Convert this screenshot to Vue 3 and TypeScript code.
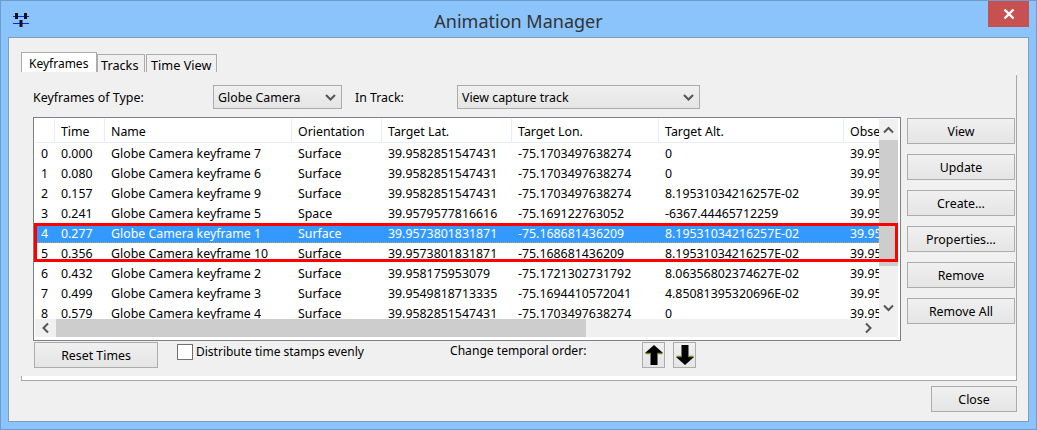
<script setup lang="ts">
interface Row {
  id: number
  time: string
  key: number
  orient: string
  lat: string
  lon: string
  alt: string
  obs: string
}

const LAT = '39.9582851547431'
const LON = '-75.1703497638274'
const ALT = '8.19531034216257E-02'
const OBS = '39.9582851547431'

const rows: Row[] = [
  { id: 0, time: '0.000', key: 7, orient: 'Surface', lat: LAT, lon: LON, alt: '0', obs: OBS },
  { id: 1, time: '0.080', key: 6, orient: 'Surface', lat: LAT, lon: LON, alt: '0', obs: OBS },
  { id: 2, time: '0.157', key: 9, orient: 'Surface', lat: LAT, lon: LON, alt: ALT, obs: OBS },
  { id: 3, time: '0.241', key: 5, orient: 'Space', lat: '39.9579577816616', lon: '-75.169122763052', alt: '-6367.44465712259', obs: OBS },
  { id: 4, time: '0.277', key: 1, orient: 'Surface', lat: '39.9573801831871', lon: '-75.168681436209', alt: ALT, obs: OBS },
  { id: 5, time: '0.356', key: 10, orient: 'Surface', lat: '39.9573801831871', lon: '-75.168681436209', alt: ALT, obs: OBS },
  { id: 6, time: '0.432', key: 2, orient: 'Surface', lat: '39.958175953079', lon: '-75.1721302731792', alt: '8.06356802374627E-02', obs: OBS },
  { id: 7, time: '0.499', key: 3, orient: 'Surface', lat: '39.9549818713335', lon: '-75.1694410572041', alt: '4.85081395320696E-02', obs: OBS },
  { id: 8, time: '0.579', key: 4, orient: 'Surface', lat: LAT, lon: LON, alt: '0', obs: OBS },
]

const headers = ['', 'Time', 'Name', 'Orientation', 'Target Lat.', 'Target Lon.', 'Target Alt.', 'Observer Lat.']
const actions = ['View', 'Update', 'Create...', 'Properties...', 'Remove', 'Remove All']
</script>

<template>
  <div class="window">
    <header class="titlebar">
      <svg class="app-icon" width="16" height="14" viewBox="0 0 16 14">
        <path d="M0 3.500h16M0 10.500h16" stroke="#1a1aff" stroke-width="1" />
        <path d="M3.500 0v6M12.500 0v6M8 7v7" stroke="#111" stroke-width="3" />
      </svg>
      <h1 class="title">Animation Manager</h1>
      <button class="win-close" aria-label="Close">
        <svg width="12" height="12" viewBox="0 0 12 12"><path d="M1.500 1.500l9 9M10.500 1.500l-9 9" stroke="#fff" stroke-width="2.400" /></svg>
      </button>
    </header>

    <div class="client">
      <div class="tabs">
        <div class="tab active">Keyframes</div>
        <div class="tab">Tracks</div>
        <div class="tab">Time View</div>
      </div>

      <section class="pane">
        <div class="inner">
          <div class="filters">
            <label class="lbl-type">Keyframes of Type:</label>
            <div class="combo combo-type">Globe Camera<svg class="chev" width="11" height="7" viewBox="0 0 11 7"><path d="M1 1l4.500 4.500L10 1" fill="none" stroke="#555" stroke-width="2" /></svg></div>
            <label class="lbl-track">In Track:</label>
            <div class="combo combo-track">View capture track<svg class="chev" width="11" height="7" viewBox="0 0 11 7"><path d="M1 1l4.500 4.500L10 1" fill="none" stroke="#555" stroke-width="2" /></svg></div>
          </div>

          <div class="middle">
            <div class="table-frame">
              <div class="viewport">
                <div class="row head">
                  <div v-for="h in headers" :key="h" class="cell">{{ h }}</div>
                </div>
                <div v-for="r in rows" :key="r.id" class="row" :class="{ selected: r.id === 4 }">
                  <div class="cell num">{{ r.id }}</div>
                  <div class="cell">{{ r.time }}</div>
                  <div class="cell">Globe Camera keyframe {{ r.key }}</div>
                  <div class="cell">{{ r.orient }}</div>
                  <div class="cell">{{ r.lat }}</div>
                  <div class="cell">{{ r.lon }}</div>
                  <div class="cell">{{ r.alt }}</div>
                  <div class="cell">{{ r.obs }}</div>
                </div>
              </div>
              <div class="vbar">
                <svg class="sb-arrow" width="19" height="21" viewBox="0 0 19 21"><path d="M5 13.500l4.500-4.500L14 13.500" fill="none" stroke="#555" stroke-width="2" /></svg>
                <div class="vthumb"></div>
                <svg class="sb-arrow end" width="19" height="18" viewBox="0 0 19 18"><path d="M5 4.500l4.500 4.500L14 4.500" fill="none" stroke="#555" stroke-width="2" /></svg>
              </div>
              <div class="hbar">
                <svg width="21" height="18" viewBox="0 0 21 18"><path d="M13 4.500l-4.500 4.500 4.500 4.500" fill="none" stroke="#555" stroke-width="2" /></svg>
                <div class="hthumb"></div>
                <svg class="h-end" width="21" height="18" viewBox="0 0 21 18"><path d="M8 4.500l4.500 4.500-4.500 4.500" fill="none" stroke="#555" stroke-width="2" /></svg>
              </div>
              <div class="corner"></div>
              <div class="highlight"></div>
            </div>

            <div class="actions">
              <button v-for="a in actions" :key="a" class="btn action">{{ a }}</button>
            </div>
          </div>

          <div class="below">
            <button class="btn reset">Reset Times</button>
            <span class="check"></span>
            <span class="check-label">Distribute time stamps evenly</span>
            <span class="order-label">Change temporal order:</span>
            <button class="btn arrow" aria-label="Move up">
              <svg width="20" height="22" viewBox="0 0 20 22"><path d="M10 1L19 9H13.500V21H6.500V9H1Z" fill="#000" /><path d="M1.500 9.500H6.500M13.500 9.500h5" stroke="#8a8420" stroke-width="1.500" /></svg>
            </button>
            <button class="btn arrow" aria-label="Move down">
              <svg width="20" height="22" viewBox="0 0 20 22"><path d="M10 21L19 13H13.500V1H6.500V13H1Z" fill="#000" /><path d="M1.500 12.500H6.500M13.500 12.500h5" stroke="#8a8420" stroke-width="1.500" /></svg>
            </button>
          </div>
        </div>
      </section>

      <footer class="footer">
        <button class="btn close">Close</button>
      </footer>
    </div>
  </div>
</template>

<style>
html, body { margin: 0; background: #8ac4fb; }
</style>

<style scoped>
.window {
  box-sizing: border-box;
  width: 1037px;
  height: 430px;
  display: flex;
  flex-direction: column;
  background: #8ac4fb;
  border: 1px solid #6f9ccb;
  font-family: "Noto Sans", "Liberation Sans", sans-serif;
  font-size: 12.35px;
  color: #000;
  overflow: hidden;
}
.titlebar {
  position: relative;
  height: 36px;
  flex: none;
  display: flex;
  align-items: flex-start;
  justify-content: center;
}
.app-icon { position: absolute; left: 12px; top: 12px; }
.title {
  margin: 8px 0 0;
  font-size: 18px;
  line-height: 24px;
  font-weight: 400;
  color: #333;
}
.win-close {
  position: absolute;
  right: 7px;
  top: 0;
  width: 41px;
  height: 26px;
  padding: 0;
  border: 0;
  background: #c75050;
  display: flex;
  align-items: center;
  justify-content: center;
}
.client {
  flex: 1;
  margin: 0 7px 7px;
  box-sizing: border-box;
  background: #f0f0f0;
  border: 1px solid #7f9db9;
  padding: 14px 12px 0 12px;
  display: flex;
  flex-direction: column;
  min-height: 0;
}
.tabs {
  display: flex;
  align-items: flex-end;
  height: 20px;
  flex: none;
}
.tab {
  box-sizing: border-box;
  height: 18px;
  line-height: 21px;
  padding: 0 3px;
  border: 1px solid #acacac;
  border-bottom: 0;
  background: #f0f0f0;
  margin-left: 1px;
  overflow: hidden;
  white-space: nowrap;
  font-size: 12.7px;
}
.tab.active {
  height: 20px;
  line-height: 22px;
  background: #fff;
  margin-left: 0;
  width: 76px;
  padding: 0 7px;
  font-size: 12px;
}
.tab:nth-child(2) { margin-left: 0; width: 48px; }
.tab:nth-child(3) { margin-left: 1px; width: 71px; padding-left: 4px; }
.pane {
  box-sizing: border-box;
  height: 309px;
  flex: none;
  background: linear-gradient(#a8a8a8, #a8a8a8) no-repeat right bottom / 1px 305px, #fff;
  border: 1px solid #a8a8a8;
  border-top: 0;
  border-right: 0;
  padding-right: 1px;
  width: 996px;
}
.inner {
  box-sizing: border-box;
  height: 304px;
  margin-left: -1px;
  background: #f0f0f0;
  padding: 13px 0 0 12px;
  display: flex;
  flex-direction: column;
}
.filters {
  display: flex;
  align-items: center;
  height: 24px;
  flex: none;
}
.lbl-type { width: 180px; font-size: 12.45px; }
.lbl-track { width: 102px; margin-left: 13px; }
.combo {
  box-sizing: border-box;
  height: 24px;
  line-height: 23px;
  border: 1px solid #acacac;
  background: linear-gradient(#f0f0f0, #e5e5e5);
  padding-left: 4px;
  position: relative;
}
.combo-type { width: 129px; }
.combo-track { width: 243px; }
.chev { position: absolute; right: 5px; top: 8px; }
.middle {
  display: flex;
  margin-top: 8px;
  flex: none;
}
.table-frame {
  box-sizing: border-box;
  position: relative;
  width: 868px;
  height: 224px;
  border: 1px solid #7f8086;
  background: #fff;
  padding: 1px;
  display: grid;
  grid-template-columns: 844px 19px;
  grid-template-rows: 200px 18px;
}
.viewport {
  overflow: hidden;
  background: #fff;
}
.row {
  display: grid;
  grid-template-columns: 20px 50px 187px 90px 130px 147px 185px 140px;
  height: 20px;
  line-height: 22px;
  white-space: nowrap;
}
.row.head {
  height: 24px;
  line-height: 26px;
  background: #fff;
}
.row.head .cell {
  border-right: 1px solid #e5effb;
  border-bottom: 1px solid #e5effb;
  box-sizing: border-box;
  height: 24px;
}
.cell {
  padding-left: 6px;
  overflow: hidden;
}
.row.selected {
  background: #3399ff;
  color: #fff;
  outline: 1px dotted #c0a060;
  outline-offset: -1px;
}
.vbar {
  background: #f0f0f0;
  display: flex;
  flex-direction: column;
}
.vthumb { height: 126px; background: #cdcdcd; flex: none; }
.sb-arrow { flex: none; display: block; }
.sb-arrow.end { margin-top: auto; }
.hbar {
  background: #f0f0f0;
  display: flex;
  align-items: center;
}
.hthumb { width: 530px; height: 18px; background: #cdcdcd; flex: none; }
.h-end { margin-left: auto; }
.corner { background: #f0f0f0; }
.highlight {
  position: absolute;
  left: 0;
  top: 105px;
  width: 864px;
  height: 39px;
  box-sizing: border-box;
  border: 3px solid #f00;
  pointer-events: none;
}
.btn {
  box-sizing: border-box;
  border: 1px solid #acacac;
  background: linear-gradient(#f0f0f0, #e5e5e5);
  font: inherit;
  color: #000;
  padding: 0;
  height: 26px;
}
.actions {
  display: flex;
  flex-direction: column;
  gap: 10px;
  margin-left: 6px;
  padding-top: 1px;
}
.action { width: 108px; }
.below {
  display: flex;
  align-items: flex-start;
  margin-top: 1px;
  padding-left: 1px;
  flex: none;
}
.reset { width: 124px; }
.check {
  box-sizing: border-box;
  width: 16px;
  height: 16px;
  margin: 2px 3px 0 19px;
  border: 1px solid #707070;
  background: #fff;
}
.check-label { width: 254px; line-height: 18px; margin-top: 1px; font-size: 12px; }
.order-label { width: 192px; line-height: 18px; margin-top: 0; font-size: 12.1px; }
.arrow {
  width: 23px;
  margin-right: 8px;
  display: flex;
  align-items: center;
  justify-content: center;
}
.footer {
  display: flex;
  justify-content: flex-end;
  padding: 5px 0 0;
  flex: none;
  margin-right: -1px;
}
.close { width: 86px; }
</style>
